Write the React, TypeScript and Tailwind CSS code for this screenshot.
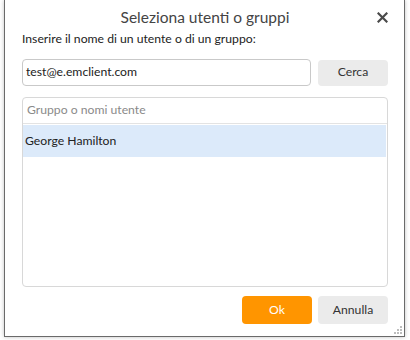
export default function App() {
  const font = { fontFamily: 'Lato, "Open Sans", sans-serif' }

  return (
    <div className="w-[410px] h-[340px] bg-white overflow-hidden" style={font}>
      <div className="relative ml-[4px] w-[401px] h-[337px] bg-white border-x border-b border-[#6a6a6a] shadow-[0_0_4px_rgba(0,0,0,0.25)] flex flex-col pl-[17px] pr-[16px]">
        {/* Title bar */}
        <div className="h-[36px] flex items-center justify-center text-[15.5px] text-[#444]">
          Seleziona utenti o gruppi
        </div>
        <button className="absolute right-[16px] top-[11px] w-[12px] h-[12px] flex items-center justify-center">
          <svg width="11" height="11" viewBox="0 0 11 11">
            <path d="M1.5 1.5 L9.5 9.5 M9.5 1.5 L1.5 9.5" stroke="#4a4a4a" strokeWidth="2.2" strokeLinecap="square" />
          </svg>
        </button>

        <div className="h-[20px] mt-[-7px] flex items-center text-[12.2px] text-[#222]">
          Inserire il nome di un utente o di un gruppo:
        </div>

        {/* Search row */}
        <div className="mt-[10px] flex items-center gap-[7px]">
          <div className="flex-1 h-[27px] rounded-[4px] border border-[#c9c9c9] flex items-center px-[3px] text-[12.2px] text-[#222]">
            test@e.emclient.com
          </div>
          <button className="w-[70px] h-[26px] rounded-[4px] bg-[#ebebeb] text-[12.2px] text-[#333]">
            Cerca
          </button>
        </div>

        {/* List */}
        <div className="mt-[11px] h-[190px] rounded-[4px] border border-[#d8d8d8] flex flex-col overflow-hidden">
          <div className="h-[26px] flex items-center px-[4px] text-[12.2px] text-[#8a8a8a] border-b border-[#e3e3e3]">
            Gruppo o nomi utente
          </div>
          <div className="mr-[1px] mt-[1px] h-[32px] bg-[#dceafa] flex items-center px-[2px] text-[12.2px] text-[#222]">
            George Hamilton
          </div>
        </div>

        {/* Footer buttons */}
        <div className="mt-[9px] flex justify-end gap-[6px]">
          <button className="w-[70px] h-[28px] rounded-[4px] bg-[#ff9500] text-[12.2px] text-white">
            Ok
          </button>
          <button className="w-[70px] h-[28px] rounded-[4px] bg-[#ebebeb] text-[12.2px] text-[#333]">
            Annulla
          </button>
        </div>

        {/* Resize grip */}
        <svg className="absolute right-[1px] bottom-[1px]" width="9" height="9" viewBox="0 0 9 9">
          <rect x="6" y="0" width="2" height="2" fill="#bdbdbd" />
          <rect x="3" y="3" width="2" height="2" fill="#bdbdbd" />
          <rect x="6" y="3" width="2" height="2" fill="#bdbdbd" />
          <rect x="0" y="6" width="2" height="2" fill="#bdbdbd" />
          <rect x="3" y="6" width="2" height="2" fill="#bdbdbd" />
          <rect x="6" y="6" width="2" height="2" fill="#bdbdbd" />
        </svg>
      </div>
    </div>
  )
}
